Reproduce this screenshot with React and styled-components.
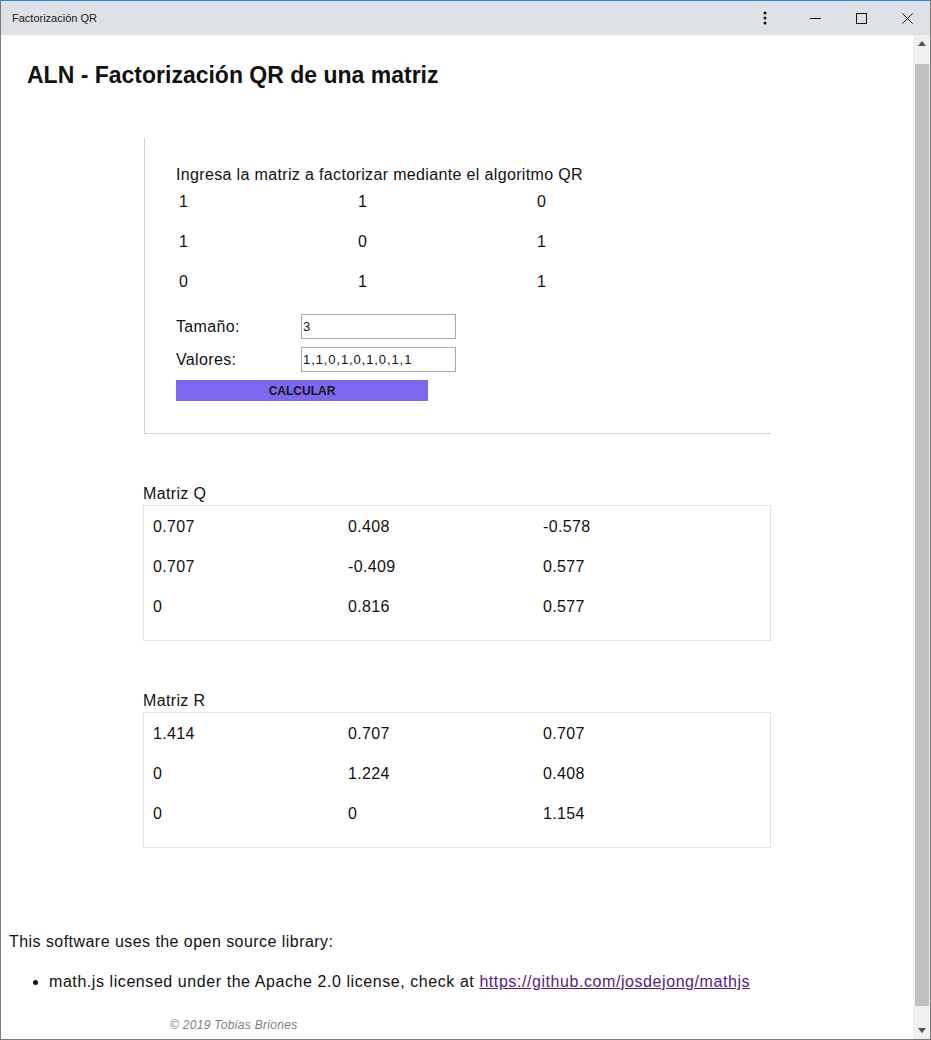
import React from 'react';
import styled, { createGlobalStyle } from 'styled-components';

const GlobalStyle = createGlobalStyle`
  html, body { margin: 0; padding: 0; height: 100%; overflow: hidden; background: #fff; }
  body { font-family: "Liberation Sans", Arial, sans-serif; color: #111; }
  #root { height: 100%; }
`;

const Window = styled.div`
  box-sizing: border-box;
  width: 931px;
  height: 1040px;
  display: flex;
  flex-direction: column;
  border: 1px solid #7a7a7a;
  border-top-color: #2b88d8;
  background: #fff;
  overflow: hidden;
`;

const TitleBar = styled.div`
  flex: 0 0 34px;
  display: flex;
  align-items: center;
  background: #dee1e6;
  padding-left: 11px;
`;

const WindowTitle = styled.span`
  flex: 1;
  font-size: 11px;
  color: #1b1b1b;
`;

const ControlButton = styled.div`
  width: 46px;
  height: 34px;
  display: flex;
  align-items: center;
  justify-content: center;
  margin-right: ${p => (p.$gap ? '4px' : '0')};
`;

const Body = styled.div`
  flex: 1;
  display: flex;
  min-height: 0;
`;

const Page = styled.div`
  flex: 1;
  display: flex;
  flex-direction: column;
  overflow: hidden;
`;

const Scrollbar = styled.div`
  flex: 0 0 17px;
  display: flex;
  flex-direction: column;
  background: #f0f0f0;
`;

const ScrollArrow = styled.div`
  flex: 0 0 17px;
  display: flex;
  align-items: center;
  justify-content: center;
`;

const ScrollTrack = styled.div`
  flex: 1;
  display: flex;
  padding: 12px 1px 16px 2px;
`;

const ScrollThumb = styled.div`
  flex: 1;
  background: #c1c1c1;
`;

const Heading = styled.h1`
  margin: 0;
  padding: 26px 0 0 26px;
  font-size: 23px;
  line-height: 28px;
  font-weight: bold;
  color: #111;
`;

const Main = styled.main`
  width: 628px;
  margin: 49px 0 0 142px;
  display: flex;
  flex-direction: column;
`;

const FormCard = styled.section`
  margin-left: 1px;
  border-left: 1px solid #d3d3d3;
  border-bottom: 1px solid #d3d3d3;
  padding: 29px 0 32px 31px;
  display: flex;
  flex-direction: column;
`;

const Prompt = styled.div`
  font-size: 16px;
  line-height: 13px;
  padding-top: 1px;
  letter-spacing: 0.35px;
`;

const MatrixGrid = styled.div`
  display: grid;
  grid-template-columns: repeat(3, ${p => p.$col}px);
  grid-auto-rows: 40px;
  margin-left: ${p => p.$offset || 0}px;
`;

const Cell = styled.div`
  font-size: 16px;
  padding-top: 2px;
  line-height: 38px;
  letter-spacing: 0.35px;
  color: #111;
`;

const FieldRows = styled.div`
  margin-top: 13px;
  display: flex;
  flex-direction: column;
  gap: 8px;
`;

const FieldRow = styled.label`
  display: flex;
  align-items: center;
  height: 25px;
`;

const FieldLabel = styled.span`
  width: 125px;
  font-size: 16px;
  letter-spacing: 0.35px;
`;

const TextInput = styled.input`
  box-sizing: border-box;
  width: 155px;
  height: 25px;
  border: 1px solid #a9a9a9;
  padding: 0 0 0 1px;
  font-family: "Liberation Sans", Arial, sans-serif;
  font-size: 13px;
  letter-spacing: 0.9px;
  color: #111;
  outline: none;
`;

const CalcButton = styled.button`
  width: 252px;
  height: 21px;
  border: none;
  padding: 0;
  background: #7b68ee;
  font-family: "Liberation Sans", Arial, sans-serif;
  font-weight: bold;
  font-size: 12px;
  color: #161616;
  cursor: pointer;
`;

const ResultSection = styled.section`
  margin-top: 49px;
  display: flex;
  flex-direction: column;
`;

const ResultLabel = styled.div`
  font-size: 16px;
  padding-top: 1px;
  line-height: 19px;
  letter-spacing: 0.35px;
  margin-bottom: 2px;
`;

const ResultBox = styled.div`
  border: 1px solid #e3e3e3;
  padding: 0 0 14px 9px;
`;

const Footer = styled.footer`
  margin-top: 84px;
  padding-left: 8px;
  font-size: 16px;
  letter-spacing: 0.45px;
`;

const FooterText = styled.p`
  margin: 0;
  line-height: 20px;
`;

const LicenseList = styled.ul`
  margin: 20px 0 0;
  padding-left: 40px;
  line-height: 20px;
  letter-spacing: 0.57px;
`;

const Link = styled.a`
  color: #551a8b;
  text-decoration: underline;
`;

const Copyright = styled.div`
  margin-top: 25px;
  padding-left: 161px;
  font-size: 12px;
  line-height: 16px;
  font-style: italic;
  letter-spacing: 0.3px;
  color: #7d7d7d;
`;

const inputMatrix = [
  ['1', '1', '0'],
  ['1', '0', '1'],
  ['0', '1', '1'],
];

const qMatrix = [
  ['0.707', '0.408', '-0.578'],
  ['0.707', '-0.409', '0.577'],
  ['0', '0.816', '0.577'],
];

const rMatrix = [
  ['1.414', '0.707', '0.707'],
  ['0', '1.224', '0.408'],
  ['0', '0', '1.154'],
];

function Matrix({ data, col, offset }) {
  return (
    <MatrixGrid $col={col} $offset={offset}>
      {data.flat().map((v, i) => (
        <Cell key={i}>{v}</Cell>
      ))}
    </MatrixGrid>
  );
}

export default function App() {
  return (
    <>
      <GlobalStyle />
      <Window>
        <TitleBar>
          <WindowTitle>Factorización QR</WindowTitle>
          <ControlButton $gap>
            <svg width="4" height="14" viewBox="0 0 4 14">
              <circle cx="2" cy="2" r="1.5" fill="#111" />
              <circle cx="2" cy="7" r="1.5" fill="#111" />
              <circle cx="2" cy="12" r="1.5" fill="#111" />
            </svg>
          </ControlButton>
          <ControlButton>
            <svg width="11" height="11" viewBox="0 0 11 11">
              <line x1="0" y1="5.5" x2="11" y2="5.5" stroke="#111" strokeWidth="1" />
            </svg>
          </ControlButton>
          <ControlButton>
            <svg width="11" height="11" viewBox="0 0 11 11">
              <rect x="0.5" y="0.5" width="10" height="10" fill="none" stroke="#111" strokeWidth="1" />
            </svg>
          </ControlButton>
          <ControlButton>
            <svg width="11" height="11" viewBox="0 0 11 11">
              <path d="M0.5 0.5 L10.5 10.5 M10.5 0.5 L0.5 10.5" stroke="#111" strokeWidth="1" />
            </svg>
          </ControlButton>
        </TitleBar>
        <Body>
          <Page>
            <Heading>ALN - Factorización QR de una matriz</Heading>
            <Main>
              <FormCard>
                <Prompt>Ingresa la matriz a factorizar mediante el algoritmo QR</Prompt>
                <Matrix data={inputMatrix} col={179} offset={3} />
                <FieldRows>
                  <FieldRow>
                    <FieldLabel>Tamaño:</FieldLabel>
                    <TextInput defaultValue="3" />
                  </FieldRow>
                  <FieldRow>
                    <FieldLabel>Valores:</FieldLabel>
                    <TextInput defaultValue="1,1,0,1,0,1,0,1,1" />
                  </FieldRow>
                  <CalcButton>CALCULAR</CalcButton>
                </FieldRows>
              </FormCard>
              <ResultSection>
                <ResultLabel>Matriz Q</ResultLabel>
                <ResultBox>
                  <Matrix data={qMatrix} col={195} />
                </ResultBox>
              </ResultSection>
              <ResultSection>
                <ResultLabel>Matriz R</ResultLabel>
                <ResultBox>
                  <Matrix data={rMatrix} col={195} />
                </ResultBox>
              </ResultSection>
            </Main>
            <Footer>
              <FooterText>This software uses the open source library:</FooterText>
              <LicenseList>
                <li>
                  math.js licensed under the Apache 2.0 license, check at{' '}
                  <Link href="#">https://github.com/josdejong/mathjs</Link>
                </li>
              </LicenseList>
              <Copyright>© 2019 Tobias Briones</Copyright>
            </Footer>
          </Page>
          <Scrollbar>
            <ScrollArrow>
              <svg width="8" height="5" viewBox="0 0 8 5">
                <polygon points="0,5 8,5 4,0" fill="#505050" />
              </svg>
            </ScrollArrow>
            <ScrollTrack>
              <ScrollThumb />
            </ScrollTrack>
            <ScrollArrow>
              <svg width="8" height="5" viewBox="0 0 8 5">
                <polygon points="0,0 8,0 4,5" fill="#505050" />
              </svg>
            </ScrollArrow>
          </Scrollbar>
        </Body>
      </Window>
    </>
  );
}
